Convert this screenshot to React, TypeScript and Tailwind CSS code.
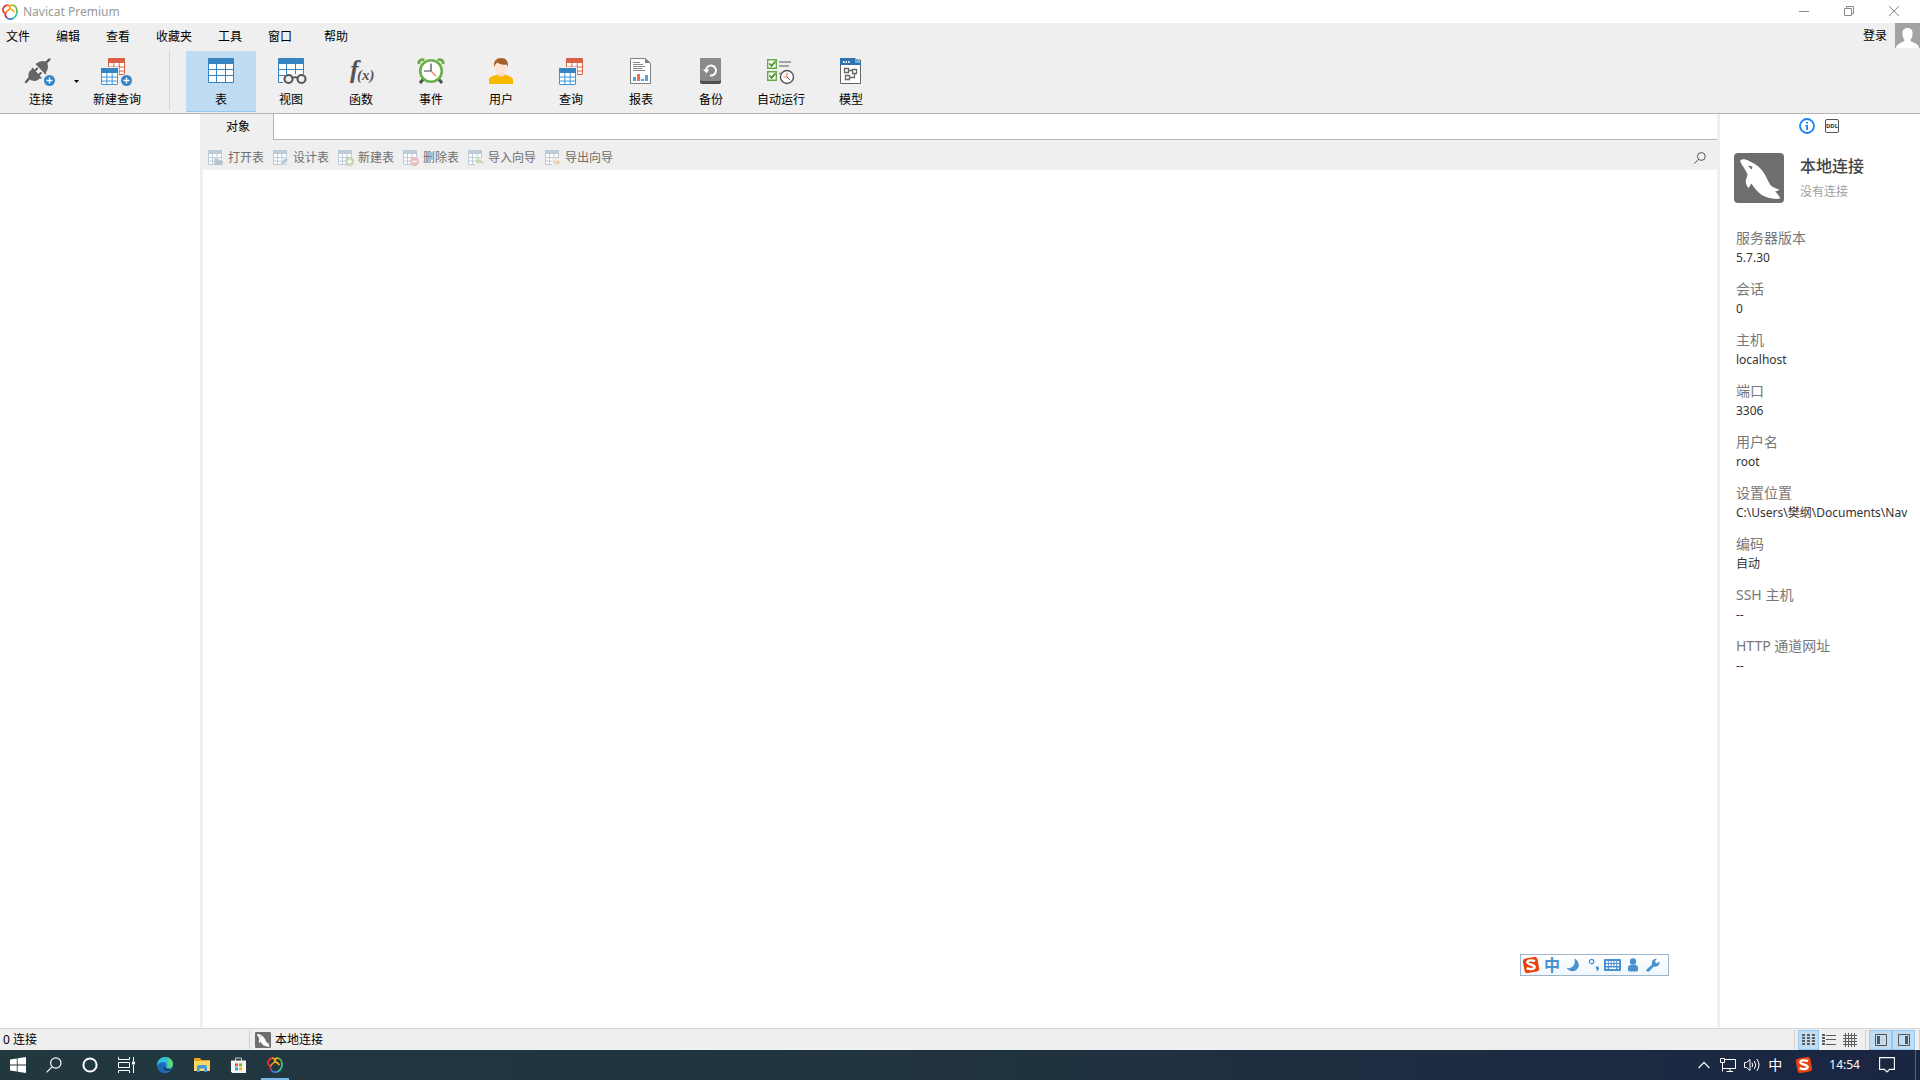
import React from "react";

const MENUS = ["文件", "编辑", "查看", "收藏夹", "工具", "窗口", "帮助"];

const DETAILS = [
  { label: "服务器版本", value: "5.7.30" },
  { label: "会话", value: "0" },
  { label: "主机", value: "localhost" },
  { label: "端口", value: "3306" },
  { label: "用户名", value: "root" },
  { label: "设置位置", value: "C:\\Users\\樊纲\\Documents\\Nav" },
  { label: "编码", value: "自动" },
  { label: "SSH 主机", value: "--" },
  { label: "HTTP 通道网址", value: "--" },
];

/* ---------- shared drawings ---------- */

const NavicatLogo = ({ className }: { className?: string }) => (
  <svg viewBox="0 0 16 16" className={className} fill="none" strokeWidth="1.7" strokeLinecap="round" aria-hidden="true">
    <path d="M5.6 1.2C2.6 1.4 .8 3.8 1 6.4C1.2 8.4 2.4 9 3.6 8.8" stroke="#e5352b" />
    <path d="M14.8 6.4C15.6 10.6 12.8 14.2 9.4 15" stroke="#37c3a8" />
    <path d="M9.8 14.9C7.6 15.4 5.6 14.6 4.4 13.2" stroke="#3b82dc" />
    <path d="M4.4 13.2C3.2 11.8 3 10 3.8 8.6" stroke="#c23a5a" />
    <path d="M10 1.2C13 1.2 14.8 3.6 14.8 6.6" stroke="#63bf4c" />
    <path d="M5.6 1.2C8 1.4 8.6 3.4 7.8 4.8C6.8 6.2 5 6.8 3.8 8.6" stroke="#f58a1f" />
    <path d="M7.8 4.8C8 3 8.6 1.4 10 1.2" stroke="#f7b01e" />
    <path d="M7.8 4.8C9.6 5 11.4 6.2 12 7.6" stroke="#f7b01e" />
  </svg>
);

const Dolphin = ({ className }: { className?: string }) => (
  <svg viewBox="0 0 50 50" className={className} aria-hidden="true">
    <rect width="50" height="50" rx="4" fill="#6e6e6e" />
    <path
      d="M6.2 8.4C6.2 6.4 8.6 5.8 11.4 6.6C15 7.6 16 8.8 20 10.4C25 13 28 17 30.6 21C33 25 34.4 29 36.4 32C39 34.6 42 35.4 45.4 36.4C44.2 37.4 42.6 38 41 38.4C43.4 40.4 45.4 43 46.2 45.8C41 46.2 36 45.6 31.6 43.8C26 41.6 22.4 37.4 19.4 33.4C18.6 32 17.8 31 17 30.8C16.4 32.4 15.6 33.8 14.6 35C12 32.4 11.4 29.4 12 26.4C12.4 24.6 13.6 23 13.4 21.6C13 18.4 8.6 13.6 6.2 8.4Z"
      fill="#fff"
    />
    <path d="M14 12.4L18.4 13.6L18 16.2L16.4 15.6Z" fill="#6e6e6e" />
  </svg>
);

interface GridProps {
  x: number;
  y: number;
  size: number;
  head: string;
  line: string;
}

const Grid = ({ x, y, size, head, line }: GridProps) => {
  const step = (size - 1) / 3;
  const top = size * 0.3;
  const row = (size - top) / 3;
  return (
    <g>
      <rect x={x + 0.5} y={y + 0.5} width={size - 1} height={size - 1} rx="0.5" fill="#fff" stroke={line} />
      {[1, 2].map((i) => (
        <path key={i} d={`M${x + 0.5 + i * step} ${y + top}V${y + size}M${x} ${y + top + i * row}H${x + size}`} stroke={line} fill="none" />
      ))}
      <rect x={x} y={y} width={size} height={top} rx="0.5" fill={head} />
    </g>
  );
};

const PlusBadge = ({ cx }: { cx: number }) => (
  <g>
    <circle cx={cx} cy="22.5" r="5.5" fill="#3584c4" />
    <path d={`M${cx - 3} 22.5H${cx + 3}M${cx} 19.5V25.5`} stroke="#fff" strokeWidth="1.3" />
  </g>
);

/* ---------- toolbar icons, all on a 32x28 box ---------- */

const PlugIcon = (
  <>
    <path d="M1 24L4 20.4" stroke="#5e5e5e" strokeWidth="2.4" strokeLinecap="round" />
    <path d="M4 21C2.4 16 4 12.6 7.8 10.8L15.6 19.6C12.6 23.4 8.6 24.2 4 21Z" fill="#666" />
    <path d="M7 10L16.4 20.6" stroke="#5e5e5e" strokeWidth="1.4" />
    <path d="M10 12.6L12.8 10M13.6 17L16.4 14.4" stroke="#5e5e5e" strokeWidth="2" />
    <path d="M11 5.6L21 16" stroke="#5e5e5e" strokeWidth="1.4" />
    <path d="M11.6 6C13.6 3 18 2 21.6 4C24 8 23 12 20.4 15Z" fill="#666" />
    <path d="M21.4 4.4L24.4 1.4" stroke="#5e5e5e" strokeWidth="2.4" strokeLinecap="round" />
    <PlusBadge cx={24.5} />
  </>
);

const NewQueryIcon = (
  <>
    <Grid x={7} y={0} size={17} head="#dc6144" line="#dc6144" />
    <rect x="0" y="9" width="18" height="18" fill="#efefef" />
    <Grid x={0} y={10} size={17} head="#3683c2" line="#4096d8" />
    <circle cx="25.5" cy="22.5" r="6.4" fill="#efefef" />
    <PlusBadge cx={25.5} />
  </>
);

const TableCells = (
  <>
    <rect x="3" width="26" height="25" rx="1" fill="#3683c2" />
    <path d="M4 6H11V11H4ZM12 6H20V11H12ZM21 6H28V11H21ZM4 12H11V17H4ZM12 12H20V17H12ZM21 12H28V17H21ZM4 18H11V24H4ZM12 18H20V24H12ZM21 18H28V24H21Z" fill="#fff" />
  </>
);

const ViewIcon = (
  <>
    {TableCells}
    <path d="M8 20L11 16H30V27H8Z" fill="#efefef" />
    <circle cx="13.5" cy="21" r="4" fill="#efefef" stroke="#555" strokeWidth="2" />
    <circle cx="26.5" cy="21" r="4" fill="#efefef" stroke="#555" strokeWidth="2" />
    <path d="M17.5 20.4Q20 18 22.5 20.4" stroke="#555" strokeWidth="1.6" fill="none" />
  </>
);

const FunctionIcon = (
  <g fill="#555" fontFamily="Liberation Serif, serif" fontStyle="italic">
    <text x="5" y="20" fontSize="26" fontWeight="bold">f</text>
    <text x="12" y="22" fontSize="15" fontWeight="bold">(x)</text>
  </g>
);

const ClockIcon = (
  <>
    <path d="M4 6C3.2 2.8 6 .8 9.4 2M28 6C28.8 2.8 26 .8 22.6 2" stroke="#69aa46" strokeWidth="2.8" fill="none" />
    <path d="M5 25L8 21.6M27 25L24 21.6" stroke="#4d4d4d" strokeWidth="3" />
    <circle cx="16" cy="13" r="10.8" fill="#fff" stroke="#69b045" strokeWidth="2.6" />
    <path d="M9 13H16V5.6" stroke="#444" strokeWidth="1.2" fill="none" />
    <path d="M16 13L21 18" stroke="#f4795b" strokeWidth="1.3" />
  </>
);

const UserIcon = (
  <>
    <path d="M4 26V21.6C4 18.4 11 17.6 12.6 16.6H19.4C21 17.6 28 18.4 28 21.6V26Z" fill="#f8b800" />
    <path d="M12.8 13H19.2V17.2Q16 19.6 12.8 17.2Z" fill="#fbdcc8" />
    <ellipse cx="16" cy="8.6" rx="6.4" ry="7.2" fill="#fde4d4" />
    <path d="M9 9C8.4 3 11.4 0 16 0C20.8 0 23.6 3 23 9L21.6 6.4C18 7 15 6.6 12.4 4.6C11.2 5.6 10 7 9 9Z" fill="#a65f28" />
  </>
);

const QueryIcon = (
  <>
    <Grid x={11} y={0} size={17} head="#dc6144" line="#dc6144" />
    <rect x="4" y="9" width="18" height="18" fill="#efefef" />
    <Grid x={4} y={10} size={17} head="#3683c2" line="#4096d8" />
  </>
);

const ReportIcon = (
  <>
    <path d="M5.5 .5H20L25.5 5V25.5H5.5Z" fill="#fff" stroke="#808080" />
    <path d="M20 .5V5H25.5Z" fill="#808080" />
    <path d="M8 4.5H15M8 6.5H18M8 8.5H20M8 10.5H17M8 12.5H20" stroke="#8a8a8a" />
    <path d="M8 19H11V23H8ZM16 21H19V23H16ZM20 17H23V23H20Z" fill="#4ea0e0" />
    <rect x="12" y="16" width="3" height="7" fill="#ee6c4d" />
  </>
);

const BackupIcon = (
  <>
    <rect x="5" width="21" height="26" rx="2" fill="#4f4f4f" />
    <rect x="5" width="21" height="23" rx="2" fill="#8a8a8a" />
    <path d="M11 12.6A5 5 0 1 1 15 17.4" stroke="#fff" strokeWidth="2" fill="none" />
    <path d="M8 11.4H14.4L11.4 15.2Z" fill="#fff" />
  </>
);

const AutomationIcon = (
  <>
    <path d="M2.7 1.7H11.3V10.3H2.7ZM2.7 13.7H11.3V22.3H2.7Z" fill="#fff" stroke="#69a844" strokeWidth="1.4" />
    <path d="M4.4 5.4L6.6 7.8L10.4 3.4M4.4 17.4L6.6 19.8L10.4 15.4" stroke="#4f9431" strokeWidth="1.8" fill="none" />
    <path d="M14 4H26M14 8H24M14 15.5H17" stroke="#8a8a8a" strokeWidth="1.6" />
    <circle cx="22" cy="19" r="6.5" fill="#fff" stroke="#555" strokeWidth="1.4" />
    <path d="M18.4 19H22V14.6" stroke="#f4795b" fill="none" />
    <path d="M22 19L25 22" stroke="#555" />
  </>
);

const ModelIcon = (
  <>
    <path d="M5.5 2H25.5V25.5H5.5Z" fill="#fff" stroke="#666" />
    <path d="M5 0H20L26 5V7H5Z" fill="#2f74b0" />
    <path d="M20 0V5H26Z" fill="#62b0ec" />
    <path d="M8 3H9.4V5H8ZM10.6 3H12V5H10.6ZM13.2 3H14.6V5H13.2Z" fill="#fff" />
    <path d="M9.5 10.5H13.5V14.5H9.5ZM17.5 11.5H21.5V15.5H17.5ZM10.5 17.5H14.5V21.5H10.5ZM13.5 12.5H17.5M19.5 15.5V19.5H14.5" stroke="#666" strokeWidth="1.3" fill="none" />
  </>
);

const OBJECT_BUTTONS = [
  { label: "表", icon: TableCells, active: true },
  { label: "视图", icon: ViewIcon },
  { label: "函数", icon: FunctionIcon },
  { label: "事件", icon: ClockIcon },
  { label: "用户", icon: UserIcon },
  { label: "查询", icon: QueryIcon },
  { label: "报表", icon: ReportIcon },
  { label: "备份", icon: BackupIcon },
  { label: "自动运行", icon: AutomationIcon },
  { label: "模型", icon: ModelIcon },
];

interface ToolButtonProps {
  label: string;
  icon: React.ReactNode;
  width: string;
  active?: boolean;
}

const ToolButton: React.FC<ToolButtonProps> = ({ label, icon, width, active }) => (
  <button
    className={`${width} shrink-0 h-[61px] flex flex-col items-center pt-[7px] border-b text-xs whitespace-nowrap ${
      active ? "bg-[#c0dcf3] border-[#90c8f6]" : "border-transparent"
    }`}
  >
    <svg viewBox="0 0 32 28" className="w-8 h-7 shrink-0 overflow-visible" aria-hidden="true">{icon}</svg>
    <span className="mt-1 leading-5">{label}</span>
  </button>
);

/* ---------- object toolbar ---------- */

const TASKS = [
  {
    label: "打开表",
    mark: <path d="M6 15.5V8H10L11 9.5H14.5V11H16L14.4 15.5Z" fill="#b4c5d2" stroke="#efefef" strokeWidth="0.8" />,
  },
  {
    label: "设计表",
    mark: <path d="M7.4 15.6L8 12.4L13 7.4L15.4 9.8L10.4 14.8Z" fill="#b4c5d2" stroke="#efefef" strokeWidth="0.8" />,
  },
  {
    label: "新建表",
    mark: (
      <>
        <circle cx="11.5" cy="11.5" r="4.5" fill="#c0d6b4" />
        <path d="M9 11.5H14M11.5 9V14" stroke="#fff" strokeWidth="1.3" />
      </>
    ),
  },
  {
    label: "删除表",
    mark: (
      <>
        <circle cx="11.5" cy="11.5" r="4.5" fill="#e8bcb8" />
        <path d="M9 11.5H14" stroke="#fff" strokeWidth="1.3" />
      </>
    ),
  },
  {
    label: "导入向导",
    mark: (
      <>
        <path d="M7 8H16V16H7Z" fill="#efefef" />
        <path d="M7 11L11 7.6V9.8C14 9.8 15.6 11.6 15.4 15C14.4 13 13 12.4 11 12.4V14.4Z" fill="#c3d8b8" />
      </>
    ),
  },
  {
    label: "导出向导",
    mark: (
      <>
        <path d="M7 8H16V16H7Z" fill="#efefef" />
        <path d="M15.6 12.4L11.8 9V11.2C10 11.2 8.8 10.4 8 8.4C7.4 11.8 9 13.8 11.8 13.8V15.8Z" fill="#eed3b0" />
      </>
    ),
  },
];

const TaskIcon = ({ children }: { children: React.ReactNode }) => (
  <svg viewBox="0 0 16 16" className="w-4 h-4 shrink-0" aria-hidden="true">
    <path d="M.5 4V14.5H13.5V4" stroke="#bccbd6" fill="#fff" />
    <path d="M0 0H14V4H0Z" fill="#bccbd6" />
    <path d="M0 7.5H14M0 11H14M4.5 4V14.5M9 4V14.5" stroke="#bccbd6" fill="none" />
    {children}
  </svg>
);

const SearchGlyph = ({ className }: { className?: string }) => (
  <svg viewBox="0 0 16 16" className={className} fill="none" stroke="currentColor" strokeWidth="1.2" aria-hidden="true">
    <circle cx="9.8" cy="6" r="5.2" />
    <path d="M6 9.8L.6 15.4" />
  </svg>
);

/* ---------- input method bar ---------- */

const SogouIcon = () => (
  <svg viewBox="0 0 18 18" className="w-[18px] h-[18px] shrink-0" aria-hidden="true">
    <rect x="1.6" y="1.6" width="14.8" height="14.8" rx="3" fill="#e8420c" transform="rotate(-10 9 9)" />
    <path d="M13 5.2C9 3.6 5 4.4 5.4 6.6C5.8 8.8 12.4 8.2 12.6 10.8C12.8 13.2 8 13.8 4.6 12.2" stroke="#fff" strokeWidth="2.4" fill="none" />
  </svg>
);

const InputMethodBar = () => (
  <div className="w-[149px] h-[22px] flex items-center pl-px border border-[#9fb4c6] bg-gradient-to-b from-white to-[#eef6fd] text-[#4a90d0]">
    <SogouIcon />
    <button className="ml-1 w-4 h-5 leading-5 text-base font-bold flex justify-center">中</button>
    <button className="ml-1.5 w-3.5" aria-label="半角">
      <svg viewBox="0 0 14 14" className="w-3.5 h-3.5"><path d="M8.4.6C14 3.6 14 9.6 10 12.2C6.6 14.4 2.4 13 .6 9.8C5.6 11.6 10.2 7 8.4.6Z" fill="currentColor" /></svg>
    </button>
    <button className="ml-2 w-3" aria-label="标点">
      <svg viewBox="0 0 12 14" className="w-3 h-3.5">
        <circle cx="3.6" cy="3.6" r="2.2" fill="none" stroke="currentColor" strokeWidth="1.2" />
        <path d="M10 8.4C12 10 10.8 12.6 8 13.6C9 12.4 9.2 11.8 8.8 11.2C6.6 10.4 8.2 7.8 10 8.4Z" fill="currentColor" />
      </svg>
    </button>
    <button className="ml-1 w-[17px]" aria-label="软键盘">
      <svg viewBox="0 0 17 12" className="w-[17px] h-3">
        <rect width="17" height="12" rx="1" fill="currentColor" />
        <path d="M2 3H15M2 6H15" stroke="#fff" strokeWidth="1.8" strokeDasharray="1.8 1" />
        <path d="M2 9.2H3.6M5 9.2H12M13.4 9.2H15" stroke="#fff" strokeWidth="1.6" />
      </svg>
    </button>
    <button className="ml-[7px] w-2.5" aria-label="账户">
      <svg viewBox="0 0 10 14" className="w-2.5 h-3.5"><circle cx="5" cy="3.4" r="3.2" fill="currentColor" /><path d="M0 10C0 7.4 2 6.6 5 6.6C8 6.6 10 7.4 10 10V12Q10 13.4 8.4 13.4H1.6Q0 13.4 0 12Z" fill="currentColor" /></svg>
    </button>
    <button className="ml-2 w-3.5" aria-label="工具箱">
      <svg viewBox="0 0 14 14" className="w-3.5 h-3.5"><path d="M.6 11.4L6 6.6C5 3.4 7.4.4 11 .8L8.8 3.4L10.8 5.4L13.6 3.6C14 7 11 9.4 7.8 8.4L3 13.4C1.6 14.4-.6 12.8.6 11.4Z" fill="currentColor" /></svg>
    </button>
  </div>
);

/* ---------- page sections ---------- */

const TitleBar = () => (
  <header className="h-[23px] shrink-0 flex items-center bg-white pl-0.5 pr-1 text-[#999]">
    <NavicatLogo className="w-4 h-4" />
    <h1 className="ml-[5px] text-xs leading-5">Navicat Premium</h1>
    <div className="ml-auto flex h-5 -mt-0.5">
      <button className="w-[45px] flex justify-center items-center" aria-label="最小化">
        <svg viewBox="0 0 10 10" className="w-2.5 h-2.5" stroke="#888"><path d="M0 5.5H10" /></svg>
      </button>
      <button className="w-[45px] flex justify-center items-center" aria-label="还原">
        <svg viewBox="0 0 10 10" className="w-2.5 h-2.5" stroke="#888" fill="none"><path d="M.5 2.5H7.5V9.5H.5ZM2.5 2.5V.5H9.5V7.5H7.5" /></svg>
      </button>
      <button className="w-[45px] flex justify-center items-center" aria-label="关闭">
        <svg viewBox="0 0 10 10" className="w-2.5 h-2.5" stroke="#888"><path d="M0 0L10 10M10 0L0 10" /></svg>
      </button>
    </div>
  </header>
);

const MenuBar = () => (
  <nav className="h-[27px] shrink-0 flex items-start bg-[#efefef] pl-1.5 text-xs">
    <div className="flex gap-[26px] h-7 items-center">
      {MENUS.map((menu) => (
        <button key={menu} className="last:ml-1.5">{menu}</button>
      ))}
    </div>
    <button className="ml-auto h-[26px]">登录</button>
    <svg viewBox="0 0 25 25" className="ml-2 w-[25px] h-[25px]" aria-label="头像">
      <rect width="25" height="25" fill="#a3a3a3" />
      <path d="M1 25C1 20 9.6 19.6 9.6 17C8 15 7.4 12.4 7.4 10C7.4 6.6 9.6 5 12.5 5C15.4 5 17.6 6.6 17.6 10C17.6 12.4 17 15 15.4 17C15.4 19.6 24 20 24 25Z" fill="#fff" />
    </svg>
  </nav>
);

const Toolbar = () => (
  <div className="h-16 shrink-0 flex bg-[#efefef] border-b border-[#b5b5b5] pl-[13px] pt-px">
    <ToolButton label="连接" icon={PlugIcon} width="w-14" />
    <button className="w-4 h-[61px] pr-px flex justify-center items-center" aria-label="更多连接">
      <svg viewBox="0 0 5 3" className="w-[5px] h-[3px]"><path d="M0 0H5L2.5 3Z" /></svg>
    </button>
    <ToolButton label="新建查询" icon={NewQueryIcon} width="w-16" />
    <div className="ml-5 mr-4 w-px h-[59px] bg-[#d4d4d4]" />
    {OBJECT_BUTTONS.map((item) => (
      <ToolButton key={item.label} {...item} width="w-[70px]" />
    ))}
  </div>
);

const ObjectPane = () => (
  <main className="flex-1 min-w-0 flex flex-col border-x-[3px] border-[#efefef] bg-white">
    <div className="h-[26px] shrink-0 flex">
      <button className="w-[71px] bg-[#efefef] border-r border-[#b5b5b5] text-xs">对象</button>
      <div className="flex-1 border-b border-[#b5b5b5]" />
    </div>
    <div className="h-[30px] shrink-0 flex items-center bg-[#efefef] pl-[5px] pr-[11px] pt-1.5 text-xs text-[#6d6d6d]">
      <div className="flex gap-[9px]">
        {TASKS.map((task) => (
          <button key={task.label} className="flex items-center gap-1 leading-5">
            <TaskIcon>{task.mark}</TaskIcon>
            {task.label}
          </button>
        ))}
      </div>
      <button className="ml-auto text-[#444]" aria-label="搜索">
        <SearchGlyph className="w-3 h-3" />
      </button>
    </div>
  </main>
);

const InfoPane = () => (
  <aside className="w-[200px] shrink-0 bg-white">
    <div className="flex justify-center items-center gap-2.5 pt-1 pr-0.5">
      <button aria-label="常规">
        <svg viewBox="0 0 16 16" className="w-4 h-4">
          <circle cx="8" cy="8" r="7" fill="none" stroke="#1a82f7" strokeWidth="1.8" />
          <path d="M7 4H9V5.6H7ZM6.4 7H9V12H7.2V8.2H6.4Z" fill="#1a82f7" />
        </svg>
      </button>
      <button className="w-3.5 h-3.5 flex justify-center border border-[#555] rounded-xs text-[6px] font-bold leading-3 text-[#333]">DDL</button>
    </div>
    <div className="mt-[19px] ml-3.5 flex gap-4">
      <Dolphin className="w-[50px] h-[50px]" />
      <div className="flex flex-col pt-px">
        <h2 className="text-base leading-6 font-medium text-[#444]">本地连接</h2>
        <p className="mt-1 text-xs leading-5 text-[#a0a0a0]">没有连接</p>
      </div>
    </div>
    <dl className="mt-[25px] pl-4 pr-2 flex flex-col gap-3 overflow-hidden whitespace-nowrap">
      {DETAILS.map((item) => (
        <div key={item.label}>
          <dt className="text-sm leading-[19px] text-[#777]">{item.label}</dt>
          <dd className="text-xs leading-5 pt-px -mb-px text-[#333]">{item.value}</dd>
        </div>
      ))}
    </dl>
  </aside>
);

const StatusBar = () => (
  <footer className="h-[22px] shrink-0 flex items-center bg-[#efefef] border-t border-[#d4d4d4] text-xs">
    <span className="w-[249px] pl-[3px]">0 连接</span>
    <div className="w-px h-[19px] bg-[#d0d0d0]" />
    <Dolphin className="ml-[5px] w-4 h-4" />
    <span className="ml-1">本地连接</span>
    <div className="ml-auto w-px h-[19px] bg-[#d0d0d0]" />
    <button className="ml-[3px] w-[21px] h-5 flex justify-center items-center bg-[#c0dcf3] border border-[#90c8f6]" aria-label="图标">
      <svg viewBox="0 0 13 11" className="w-[13px] h-[11px]" stroke="#5c5c5c" strokeWidth="3"><path d="M1.5 0V11M6.5 0V11M11.5 0V11" strokeDasharray="2 1" /></svg>
    </button>
    <button className="w-5 h-5 flex justify-center items-center" aria-label="列表">
      <svg viewBox="0 0 14 12" className="w-3.5 h-3" stroke="#5c5c5c">
        <path d="M1.5 0V12" strokeWidth="3" strokeDasharray="2 1" />
        <path d="M4 1.5H14M4 5.5H14M4 10.5H14" />
      </svg>
    </button>
    <button className="w-[21px] h-5 flex justify-center items-center" aria-label="ER 图表">
      <svg viewBox="0 0 14 14" className="w-3.5 h-3.5" stroke="#5c5c5c"><path d="M2.5 0V14M5.5 0V14M8.5 0V14M11.5 0V14M0 2.5H14M0 5.5H14M0 8.5H14M0 11.5H14" /></svg>
    </button>
    <div className="ml-[5px] mr-[3px] w-px h-[19px] bg-[#d0d0d0]" />
    <button className="w-[23px] h-5 flex justify-center items-center bg-[#c0dcf3] border border-[#90c8f6]" aria-label="导航窗格">
      <svg viewBox="0 0 12 12" className="w-3 h-3"><path d="M.5.5H11.5V11.5H.5Z" fill="none" stroke="#555" /><path d="M2 2H5V10H2Z" fill="#555" /></svg>
    </button>
    <button className="w-[23px] h-5 flex justify-center items-center bg-[#c0dcf3] border border-[#90c8f6]" aria-label="信息窗格">
      <svg viewBox="0 0 12 12" className="w-3 h-3"><path d="M.5.5H11.5V11.5H.5Z" fill="none" stroke="#555" /><path d="M7 2H10V10H7Z" fill="#555" /></svg>
    </button>
    <div className="ml-1 w-px h-[19px] bg-[#d0d0d0]" />
  </footer>
);

const Taskbar = () => (
  <div className="h-[30px] shrink-0 flex items-center bg-gradient-to-r from-[#22383f] via-[#20333f] to-[#1a2542] text-white">
    <button className="w-9 flex justify-center" aria-label="开始">
      <svg viewBox="0 0 16 16" className="w-4 h-4"><path d="M0 2.4L6.8 1.4V7.5H0ZM7.6 1.3L16 0V7.5H7.6ZM0 8.4H6.8V14.5L0 13.5ZM7.6 8.4H16V16L7.6 14.7Z" fill="#fff" /></svg>
    </button>
    <button className="w-9 flex justify-center" aria-label="搜索">
      <SearchGlyph className="w-4 h-4" />
    </button>
    <button className="w-9 flex justify-center" aria-label="Cortana">
      <svg viewBox="0 0 16 16" className="w-4 h-4"><circle cx="8" cy="8" r="6.6" fill="none" stroke="#fff" strokeWidth="2" /></svg>
    </button>
    <button className="w-9 flex justify-center" aria-label="任务视图">
      <svg viewBox="0 0 17 16" className="w-[17px] h-4" stroke="#fff" fill="none">
        <path d="M.5 0V2.5H11.5V0M.5 16V13.5H11.5V16M.5 5.5H11.5V10.5H.5ZM15.5 0V4M15.5 8V16" />
        <path d="M14 4.5H17V7.5H14Z" fill="#fff" stroke="none" />
      </svg>
    </button>
    <button className="ml-0.5 w-[37px] flex justify-center" aria-label="Edge">
      <svg viewBox="0 0 16 16" className="w-4 h-4">
        <circle cx="8" cy="8" r="8" fill="#1b7fd6" />
        <path d="M.2 6.8C1.2 2.4 4.6 0 8.2 0C12.8 0 16 3.4 16 7C16 9.6 14 11 12 11C10.4 11 9.4 10.4 9.8 9.6C10.8 7.6 9.4 5 6.4 5C3.8 5 1.2 6 .2 8.6Z" fill="#35c1d8" />
        <path d="M10 .4C14 1.4 16 4 16 7C16 9.6 14 11 12 11C10.4 11 9.4 10.4 9.8 9.6C10.8 8 12.6 4 10 .4Z" fill="#5fd67c" />
        <path d="M6 7.6C4.6 11 7 15 11.4 15.2C7 17.2 1 14.4.4 9.2C1.4 6 5 5 7.6 6Z" fill="#1769b8" />
        <path d="M7.4 7.4C6.4 10.4 9.6 13.6 14.6 11.8C13 14.4 9.4 14.6 7.6 12.8C5.8 11 6 8.6 7.4 7.4Z" fill="#20343e" />
      </svg>
    </button>
    <button className="w-[37px] flex justify-center" aria-label="文件资源管理器">
      <svg viewBox="0 0 16 14" className="w-4 h-3.5">
        <path d="M0 0H6L7.4 2H16V13H0Z" fill="#e8a51c" />
        <path d="M0 3H16V13H0Z" fill="#fbd667" />
        <path d="M3 14V9Q3 7 5 7H11Q13 7 13 9V14H10.4V10.6H5.6V14Z" fill="#3f9be0" />
      </svg>
    </button>
    <button className="w-[37px] flex justify-center" aria-label="Microsoft Store">
      <svg viewBox="0 0 15 16" className="w-[15px] h-4">
        <path d="M4.5 4V1H10.5V4" stroke="#ccc" fill="none" />
        <path d="M0 3.4H15V16H1.4L0 14.6Z" fill="#f4f4f4" />
        <path d="M4 6.4H7V9.4H4Z" fill="#f0512a" />
        <path d="M8 6.4H11V9.4H8Z" fill="#7cb918" />
        <path d="M4 10.4H7V13.4H4Z" fill="#1ea2ec" />
        <path d="M8 10.4H11V13.4H8Z" fill="#fbb60c" />
      </svg>
    </button>
    <button className="ml-1 w-7 h-[30px] flex justify-center items-center pt-0.5 border-b-2 border-[#76b9ed]" aria-label="Navicat">
      <NavicatLogo className="w-4 h-4" />
    </button>
    <div className="ml-auto flex items-center h-[30px]">
      <button aria-label="显示隐藏的图标">
        <svg viewBox="0 0 12 8" className="w-3 h-2" stroke="#fff" strokeWidth="1.2" fill="none"><path d="M.6 7L6 1.4L11.4 7" /></svg>
      </button>
      <svg viewBox="0 0 16 14" className="ml-2.5 w-4 h-3.5" stroke="#fff" fill="none" aria-label="网络">
        <path d="M5 1.5H15.5V10.5H5M.5.5H4.5V4.5H.5ZM2.5 4.5V13.5M2.5 10.5H5M10 10.5V13M6.5 13.5H13" />
      </svg>
      <svg viewBox="0 0 16 14" className="ml-2 w-4 h-3.5" stroke="#fff" fill="none" aria-label="音量">
        <path d="M.5 4.5H2.5L6 1.5V12.5L2.5 9.5H.5ZM8 4.8Q9.4 7 8 9.2M10.4 3Q13 7 10.4 11M12.8 1Q17.2 7 12.8 13" />
      </svg>
      <span className="ml-[7px] w-4 text-sm leading-5 text-center">中</span>
      <span className="ml-3"><SogouIcon /></span>
      <time className="ml-4 text-xs leading-5">14:54</time>
      <button className="ml-[19px]" aria-label="通知">
        <svg viewBox="0 0 16 16" className="w-4 h-4" stroke="#fff" strokeWidth="1.1" fill="none"><path d="M.6.6H15.4V12.4H10.6L8 15L5.4 12.4H.6Z" /></svg>
      </button>
      <div className="ml-5 mr-1 w-px h-[30px] bg-[#5a6478]" />
    </div>
  </div>
);

const App: React.FC = () => (
  <div className="h-screen flex flex-col overflow-hidden bg-white text-black font-['Noto_Sans','Noto_Sans_CJK_SC',sans-serif]">
    <TitleBar />
    <MenuBar />
    <Toolbar />
    <div className="flex-1 min-h-0 flex relative">
      <nav className="w-[200px] shrink-0 bg-white" aria-label="连接" />
      <ObjectPane />
      <InfoPane />
      {/* floats over the object list */}
      <div className="absolute right-[251px] bottom-[52px]">
        <InputMethodBar />
      </div>
    </div>
    <StatusBar />
    <Taskbar />
  </div>
);

export default App;
